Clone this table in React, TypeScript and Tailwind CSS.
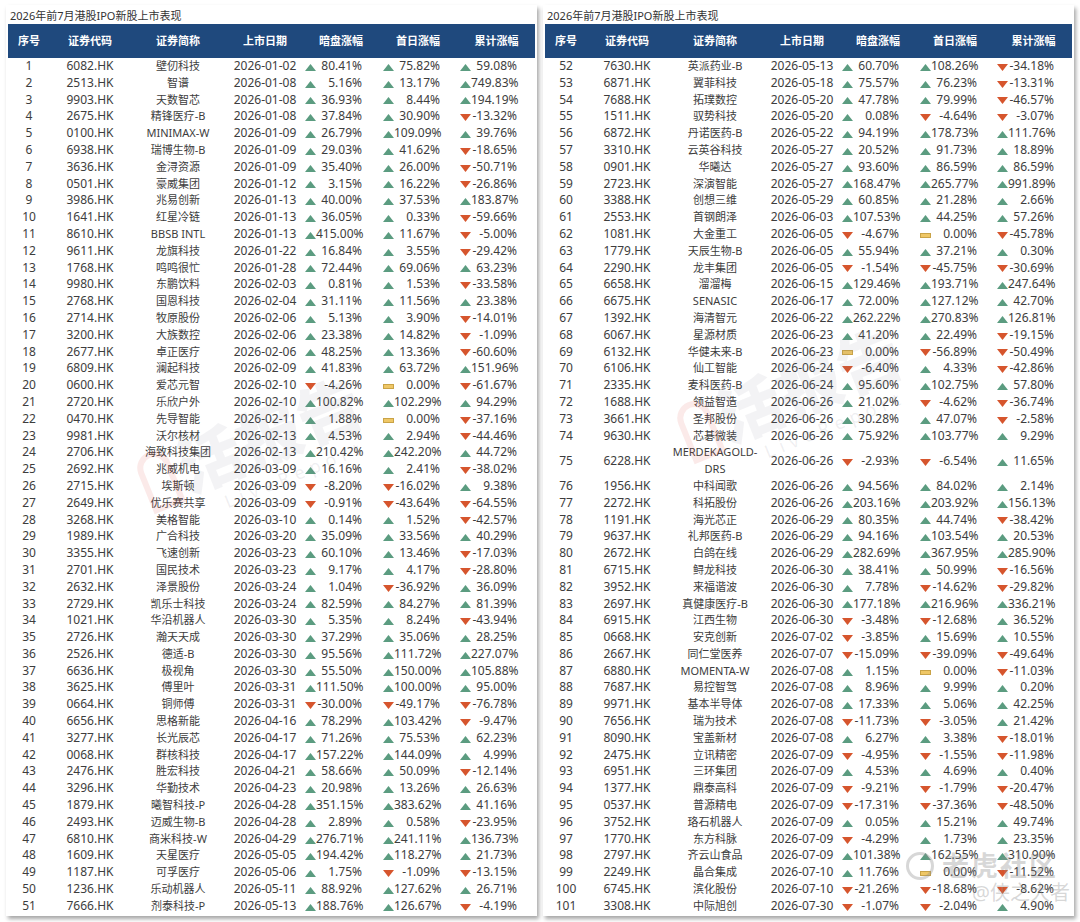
import React from 'react';

const LEFT = `1|6082.HK|壁仞科技|2026-01-02|80.41|75.82|59.08
2|2513.HK|智谱|2026-01-08|5.16|13.17|749.83
3|9903.HK|天数智芯|2026-01-08|36.93|8.44|194.19
4|2675.HK|精锋医疗-B|2026-01-08|37.84|30.90|-13.32
5|0100.HK|MINIMAX-W|2026-01-09|26.79|109.09|39.76
6|6938.HK|瑞博生物-B|2026-01-09|29.03|41.62|-18.65
7|3636.HK|金浔资源|2026-01-09|35.40|26.00|-50.71
8|0501.HK|豪威集团|2026-01-12|3.15|16.22|-26.86
9|3986.HK|兆易创新|2026-01-13|40.00|37.53|183.87
10|1641.HK|红星冷链|2026-01-13|36.05|0.33|-59.66
11|8610.HK|BBSB INTL|2026-01-13|415.00|11.67|-5.00
12|9611.HK|龙旗科技|2026-01-22|16.84|3.55|-29.42
13|1768.HK|鸣鸣很忙|2026-01-28|72.44|69.06|63.23
14|9980.HK|东鹏饮料|2026-02-03|0.81|1.53|-33.58
15|2768.HK|国恩科技|2026-02-04|31.11|11.56|23.38
16|2714.HK|牧原股份|2026-02-06|5.13|3.90|-14.01
17|3200.HK|大族数控|2026-02-06|23.38|14.82|-1.09
18|2677.HK|卓正医疗|2026-02-06|48.25|13.36|-60.60
19|6809.HK|澜起科技|2026-02-09|41.83|63.72|151.96
20|0600.HK|爱芯元智|2026-02-10|-4.26|0.00|-61.67
21|2720.HK|乐欣户外|2026-02-10|100.82|102.29|94.29
22|0470.HK|先导智能|2026-02-11|1.88|0.00|-37.16
23|9981.HK|沃尔核材|2026-02-13|4.53|2.94|-44.46
24|2706.HK|海致科技集团|2026-02-13|210.42|242.20|44.72
25|2692.HK|兆威机电|2026-03-09|16.16|2.41|-38.02
26|2715.HK|埃斯顿|2026-03-09|-8.20|-16.02|9.38
27|2649.HK|优乐赛共享|2026-03-09|-0.91|-43.64|-64.55
28|3268.HK|美格智能|2026-03-10|0.14|1.52|-42.57
29|1989.HK|广合科技|2026-03-20|35.09|33.56|40.29
30|3355.HK|飞速创新|2026-03-23|60.10|13.46|-17.03
31|2701.HK|国民技术|2026-03-23|9.17|4.17|-28.80
32|2632.HK|泽景股份|2026-03-24|1.04|-36.92|36.09
33|2729.HK|凯乐士科技|2026-03-24|82.59|84.27|81.39
34|1021.HK|华沿机器人|2026-03-30|5.35|8.24|-43.94
35|2726.HK|瀚天天成|2026-03-30|37.29|35.06|28.25
36|2526.HK|德适-B|2026-03-30|95.56|111.72|227.07
37|6636.HK|极视角|2026-03-30|55.50|150.00|105.88
38|3625.HK|傅里叶|2026-03-31|111.50|100.00|95.00
39|0664.HK|铜师傅|2026-03-31|-30.00|-49.17|-76.78
40|6656.HK|思格新能|2026-04-16|78.29|103.42|-9.47
41|3277.HK|长光辰芯|2026-04-17|71.26|75.53|62.23
42|0068.HK|群核科技|2026-04-17|157.22|144.09|4.99
43|2476.HK|胜宏科技|2026-04-21|58.66|50.09|-12.14
44|3296.HK|华勤技术|2026-04-23|20.98|13.26|26.63
45|1879.HK|曦智科技-P|2026-04-28|351.15|383.62|41.16
46|2493.HK|迈威生物-B|2026-04-28|2.89|0.58|-23.95
47|6810.HK|商米科技-W|2026-04-29|276.71|241.11|136.73
48|1609.HK|天星医疗|2026-05-05|194.42|118.27|21.73
49|1187.HK|可孚医疗|2026-05-06|1.75|-1.09|-13.15
50|1236.HK|乐动机器人|2026-05-11|88.92|127.62|26.71
51|7666.HK|剂泰科技-P|2026-05-13|188.76|126.67|-4.19`;

const RIGHT = `52|7630.HK|英派药业-B|2026-05-13|60.70|108.26|-34.18
53|6871.HK|翼菲科技|2026-05-18|75.57|76.23|-13.31
54|7688.HK|拓璞数控|2026-05-20|47.78|79.99|-46.57
55|1511.HK|驭势科技|2026-05-20|0.08|-4.64|-3.07
56|6872.HK|丹诺医药-B|2026-05-22|94.19|178.73|111.76
57|3310.HK|云英谷科技|2026-05-27|20.52|91.73|18.89
58|0901.HK|华曦达|2026-05-27|93.60|86.59|86.59
59|2723.HK|深演智能|2026-05-27|168.47|265.77|991.89
60|3388.HK|创想三维|2026-05-29|60.85|21.28|2.66
61|2553.HK|首钢朗泽|2026-06-03|107.53|44.25|57.26
62|1081.HK|大金重工|2026-06-05|-4.67|0.00|-45.78
63|1779.HK|天辰生物-B|2026-06-05|55.94|37.21|0.30
64|2290.HK|龙丰集团|2026-06-05|-1.54|-45.75|-30.69
65|6658.HK|溜溜梅|2026-06-15|129.46|193.71|247.64
66|6675.HK|SENASIC|2026-06-17|72.00|127.12|42.70
67|1392.HK|海清智元|2026-06-22|262.22|270.83|126.81
68|6067.HK|星源材质|2026-06-23|41.20|22.49|-19.15
69|6132.HK|华健未来-B|2026-06-23|0.00|-56.89|-50.49
70|6106.HK|仙工智能|2026-06-24|-6.40|4.33|-42.86
71|2335.HK|麦科医药-B|2026-06-24|95.60|102.75|57.80
72|1688.HK|领益智造|2026-06-26|21.02|-4.62|-36.74
73|3661.HK|圣邦股份|2026-06-26|30.28|47.07|-2.58
74|9630.HK|芯碁微装|2026-06-26|75.92|103.77|9.29
75|6228.HK|MERDEKAGOLD-DRS|2026-06-26|-2.93|-6.54|11.65
76|1956.HK|中科闻歌|2026-06-26|94.56|84.02|2.14
77|2272.HK|科拓股份|2026-06-26|203.16|203.92|156.13
78|1191.HK|海光芯正|2026-06-29|80.35|44.74|-38.42
79|9637.HK|礼邦医药-B|2026-06-29|94.16|103.54|20.53
80|2672.HK|白鸽在线|2026-06-29|282.69|367.95|285.90
81|6715.HK|鲟龙科技|2026-06-30|38.41|50.99|-16.56
82|3952.HK|来福谐波|2026-06-30|7.78|-14.62|-29.82
83|2697.HK|真健康医疗-B|2026-06-30|177.18|216.96|336.21
84|6915.HK|江西生物|2026-06-30|-3.48|-12.68|36.52
85|0668.HK|安克创新|2026-07-02|-3.85|15.69|10.55
86|2667.HK|同仁堂医养|2026-07-07|-15.09|-39.09|-49.64
87|6880.HK|MOMENTA-W|2026-07-08|1.15|0.00|-11.03
88|7687.HK|易控智驾|2026-07-08|8.96|9.99|0.20
89|9971.HK|基本半导体|2026-07-08|17.33|5.06|42.25
90|7656.HK|瑞为技术|2026-07-08|-11.73|-3.05|21.42
91|8090.HK|宝盖新材|2026-07-08|6.27|3.38|-18.01
92|2475.HK|立讯精密|2026-07-09|-4.95|-1.55|-11.98
93|6951.HK|三环集团|2026-07-09|4.53|4.69|0.40
94|1377.HK|鼎泰高科|2026-07-09|-9.21|-1.79|-20.47
95|0537.HK|普源精电|2026-07-09|-17.31|-37.36|-48.50
96|3752.HK|珞石机器人|2026-07-09|0.05|15.21|49.74
97|1770.HK|东方科脉|2026-07-09|-4.29|1.73|23.35
98|2797.HK|齐云山食品|2026-07-09|101.38|162.55|310.90
99|2249.HK|晶合集成|2026-07-10|11.76|0.00|-11.52
100|6745.HK|滨化股份|2026-07-10|-21.26|-18.68|-8.62
101|3308.HK|中际旭创|2026-07-30|-1.07|-2.04|4.90`;

const parse = (s: string) => s.trim().split('\n').map(l => l.split('|'));

const headers = ['序号', '证券代码', '证券简称', '上市日期', '暗盘涨幅', '首日涨幅', '累计涨幅'];
const cols = 'grid grid-cols-[42px_80px_96px_78px_74px_80px_77px]';

function Icon({ v }: { v: number }) {
  if (v > 0) {
    return (
      <svg width="11" height="7" viewBox="0 0 11 7" className="shrink-0 translate-y-[1px]">
        <polygon points="0,7 5.5,0 11,7" fill="#5b9c80" />
      </svg>
    );
  }
  if (v < 0) {
    return (
      <svg width="11" height="7" viewBox="0 0 11 7" className="shrink-0 translate-y-[1px]">
        <polygon points="0,0 11,0 5.5,7" fill="#d6552d" />
      </svg>
    );
  }
  return (
    <svg width="11" height="7" viewBox="0 0 11 7" className="shrink-0 translate-y-[1px]">
      <rect x="0.5" y="1.5" width="10" height="4" fill="#efc766" stroke="#c9a347" strokeWidth="1" />
    </svg>
  );
}

function Pct({ v, pad }: { v: string; pad: string }) {
  return (
    <div className={`flex items-center ${pad}`}>
      <Icon v={parseFloat(v)} />
      <span className="flex-1 text-right">{v}%</span>
    </div>
  );
}

function Table({ rows }: { rows: string[][] }) {
  return (
    <div className="w-[531px] bg-white px-[2px] pb-[1px] shadow-[2px_3px_4px_rgba(0,0,0,0.35)]">
      <div className="h-[19px] flex items-center pt-[3px] pl-[2px] text-[11px] text-[#333]">
        2026年前7月港股IPO新股上市表现
      </div>
      <div className={`${cols} h-[34px] items-center bg-[#1f497d] text-white text-[11px] font-bold`}>
        {headers.map(h => (
          <div key={h} className="text-center">{h}</div>
        ))}
      </div>
      <div className="text-[12px] text-[#3d3d3d]">
        {rows.map(r => {
          const tall = r[2].length > 12;
          return (
            <div key={r[0]} className={`${cols} items-center ${tall ? 'h-[33.6px]' : 'h-[16.8px]'} leading-[16.8px]`}>
              <div className="text-center">{r[0]}</div>
              <div className="text-center">{r[1]}</div>
              <div className="text-center text-[11px] px-[4px]">{r[2]}</div>
              <div className="text-center">{r[3]}</div>
              <Pct v={r[4]} pad="pl-[1px] pr-[16px]" />
              <Pct v={r[5]} pad="pl-[5px] pr-[18px]" />
              <Pct v={r[6]} pad="pl-[2px] pr-[18px]" />
            </div>
          );
        })}
      </div>
    </div>
  );
}

function Watermark({ className }: { className: string }) {
  return (
    <div className={`absolute pointer-events-none -rotate-[22deg] ${className}`}>
      <div className="flex items-center gap-[6px]">
        <div className="w-[34px] h-[60px] border-[6px] border-[rgba(220,80,70,0.12)] rounded-t-[18px]" />
        <span className="text-[64px] font-black leading-none text-[rgba(120,120,140,0.09)]">活报告</span>
      </div>
      <div className="pl-[70px] text-[18px] tracking-[6px] text-[rgba(120,120,140,0.12)]">LiveReport</div>
    </div>
  );
}

export default function App() {
  return (
    <div
      className="relative w-[1080px] h-[922px] bg-white overflow-hidden"
      style={{ fontFamily: '"Noto Sans", "Noto Sans CJK SC", sans-serif' }}
    >
      <div className="flex gap-[6px] pl-[6px] pt-[5px]">
        <Table rows={parse(LEFT)} />
        <Table rows={parse(RIGHT)} />
      </div>

      <Watermark className="left-[140px] top-[410px]" />
      <Watermark className="left-[680px] top-[360px]" />

      {/* community watermark, bottom right */}
      <div className="absolute left-[906px] top-[846px] flex items-center gap-[8px] pointer-events-none">
        <div className="w-[28px] h-[28px] rounded-full border-[3px] border-[rgba(140,140,140,0.35)]" />
        <span className="text-[27px] font-bold text-[rgba(140,140,140,0.35)] tracking-[2px]">老虎社区</span>
      </div>
      <div className="absolute left-[972px] top-[878px] text-[20px] text-[rgba(140,140,140,0.35)] pointer-events-none">
        @侠之大者
      </div>
    </div>
  );
}
